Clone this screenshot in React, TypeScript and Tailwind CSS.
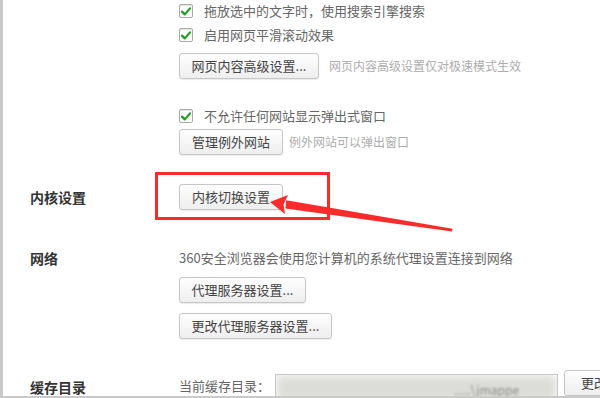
import React from "react";

const font = { fontFamily: '"Noto Sans CJK SC", "Noto Sans", sans-serif' };

const Btn = ({ children, w }: { children: React.ReactNode; w: string }) => (
	<div
		className={`${w} shrink-0 h-[26px] flex items-center justify-center rounded-[3px] border border-[#c6c6c6] bg-gradient-to-b from-[#fefefe] to-[#eeeeee] shadow-[0_1px_1px_rgba(0,0,0,0.08)] text-[13px] text-[#444] whitespace-nowrap`}
	>
		{children}
	</div>
);

const Check = ({ label }: { label: string }) => (
	<div className="flex items-center h-5 gap-[11px]">
		<div className="size-[14px] flex items-center justify-center rounded-[2px] border border-[#a8a8a8] bg-white shadow-[inset_0_1px_1px_rgba(0,0,0,0.1)]">
			<svg width="10" height="9" viewBox="0 0 10 9">
				<path d="M1 4.6 L3.8 7.4 L9 1.4" fill="none" stroke="#1e9e1e" strokeWidth="2.2" strokeLinecap="round" strokeLinejoin="round" />
			</svg>
		</div>
		<span className="text-[13px] text-[#666] whitespace-nowrap">{label}</span>
	</div>
);

export default function App() {
	return (
		<div
			className="relative w-[600px] h-[398px] overflow-hidden bg-white border-l-[3px] border-b-2 border-[#c9c9c9]"
			style={font}
		>
			<div className="flex flex-col pl-[176px] pt-px">
				<Check label="拖放选中的文字时，使用搜索引擎搜索" />
				<div className="mt-1">
					<Check label="启用网页平滑滚动效果" />
				</div>
				<div className="mt-2 flex items-center gap-[10px]">
					<Btn w="w-[140px]">网页内容高级设置...</Btn>
					<span className="text-[12px] text-[#adadad] whitespace-nowrap">网页内容高级设置仅对极速模式生效</span>
				</div>
				<div className="mt-[27px]">
					<Check label="不允许任何网站显示弹出式窗口" />
				</div>
				<div className="mt-[3px] flex items-center gap-[6px]">
					<Btn w="w-[104px]">管理例外网站</Btn>
					<span className="text-[12px] text-[#adadad] whitespace-nowrap">例外网站可以弹出窗口</span>
				</div>
			</div>

			<div className="flex flex-col pl-[27px]">
				<div className="mt-[29px] flex items-center">
					<div className="w-[149px] shrink-0 text-[14px] font-bold text-[#333]">内核设置</div>
					<Btn w="w-[104px]">内核切换设置</Btn>
				</div>

				<div className="mt-[38px] flex">
					<div className="w-[149px] shrink-0 h-5 flex items-center text-[14px] font-bold text-[#333]">网络</div>
					<div className="flex flex-col">
						<div className="h-5 flex items-center text-[13px] text-[#666] whitespace-nowrap">
							360安全浏览器会使用您计算机的系统代理设置连接到网络
						</div>
						<div className="mt-[9px]">
							<Btn w="w-[127px]">代理服务器设置...</Btn>
						</div>
						<div className="mt-[10px]">
							<Btn w="w-[153px]">更改代理服务器设置...</Btn>
						</div>
					</div>
				</div>

				<div className="mt-[31px] flex items-start">
					<div className="w-[149px] shrink-0 pt-[7px] text-[14px] font-bold text-[#333]">缓存目录</div>
					<div className="shrink-0 pt-[6px] text-[13px] text-[#666] whitespace-nowrap">当前缓存目录：</div>
					<div className="shrink-0 ml-[5px] mt-[4px] relative w-[283px] h-[28px] border border-[#c6c6c6] overflow-hidden">
						<div className="absolute inset-0 bg-[#dcdcd8] blur-[5px]" />
						<div className="absolute left-[178px] top-[6px] text-[12px] text-[#8a8a8a] blur-[1px]">.....\jmappe</div>
					</div>
					<div className="ml-[6px]">
						<Btn w="w-[60px]">更改</Btn>
					</div>
				</div>
			</div>

			<div className="absolute left-[152px] top-[172px] w-[175px] h-[48px] border-[3px] border-[#fa2b2b] pointer-events-none" />
			<svg className="absolute -left-[3px] top-0 w-[600px] h-[398px] pointer-events-none" viewBox="0 0 600 398">
				<polygon points="286.3,200.2 452.5,228.8 452.0,231.6 285.3,208.6" fill="#fa2b2b" />
				<polygon points="270,202 288,195 283.5,204.5 285,214" fill="#fa2b2b" />
			</svg>
		</div>
	);
}
